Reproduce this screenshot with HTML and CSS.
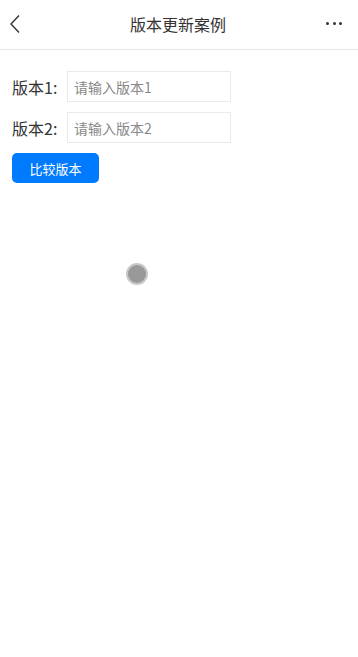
FILE: index.html
```html
<!DOCTYPE html>
<html lang="zh">
<head>
<meta charset="utf-8">
<title>版本更新案例</title>
<link rel="stylesheet" href="styles.css">
</head>
<body>
<header class="navbar">
  <div class="nav-left">
    <svg class="back" width="12" height="20" viewBox="0 0 12 20"><path d="M10 1.5 L2 10 L10 18.5" fill="none" stroke="#333" stroke-width="1.4"/></svg>
  </div>
  <div class="nav-title">版本更新案例</div>
  <div class="nav-right">
    <span class="dot"></span><span class="dot"></span><span class="dot"></span>
  </div>
</header>
<main class="content">
  <div class="row">
    <label class="label">版本1:</label>
    <input class="input" type="text" placeholder="请输入版本1">
  </div>
  <div class="row">
    <label class="label">版本2:</label>
    <input class="input" type="text" placeholder="请输入版本2">
  </div>
  <button class="btn">比较版本</button>
  <div class="circle-wrap"><span class="circle"></span></div>
</main>
</body>
</html>
```
FILE: styles.css
```css
html, body {
  margin: 0;
  padding: 0;
  background: #fff;
  font-family: "Noto Sans CJK SC", "Noto Sans", sans-serif;
  color: #333;
}
.navbar {
  height: 49px;
  border-bottom: 1px solid #e5e5e5;
  display: flex;
  align-items: center;
  justify-content: space-between;
  padding: 0 16px 0 9px;
  position: relative;
}
.nav-left {
  width: 40px;
  display: flex;
  align-items: center;
}
.back { display: block; margin-top: -2px; }
.nav-title {
  position: absolute;
  left: 0;
  right: 2px;
  text-align: center;
  font-size: 16px;
  line-height: 49px;
  color: #333;
  pointer-events: none;
}
.nav-right {
  display: flex;
  gap: 3.5px;
  align-items: center;
  margin-top: -2px;
}
.dot {
  width: 3px;
  height: 3px;
  border-radius: 50%;
  background: #333;
}
.content {
  padding: 21px 12px 0 12px;
}
.row {
  display: flex;
  align-items: center;
  height: 31px;
  margin-bottom: 10px;
}
.label {
  font-size: 16px;
  width: 55px;
  color: #333;
}
.input {
  box-sizing: border-box;
  width: 164px;
  height: 31px;
  border: 1px solid #eaeaea;
  padding: 0 6px;
  font-family: "Noto Sans CJK SC", "Noto Sans", sans-serif;
  font-size: 14px;
  color: #333;
  outline: none;
  background: #fff;
}
.input::placeholder { color: #888; }
.btn {
  display: block;
  width: 87px;
  height: 30px;
  border: none;
  border-radius: 5px;
  background: #007aff;
  color: #fff;
  font-family: "Noto Sans CJK SC", "Noto Sans", sans-serif;
  font-size: 13px;
  padding: 0;
}
.circle-wrap {
  padding: 80px 0 0 114px;
}
.circle {
  display: block;
  width: 18px;
  height: 18px;
  border-radius: 50%;
  background: #999;
  border: 2px solid #c8c8c8;
}
```
